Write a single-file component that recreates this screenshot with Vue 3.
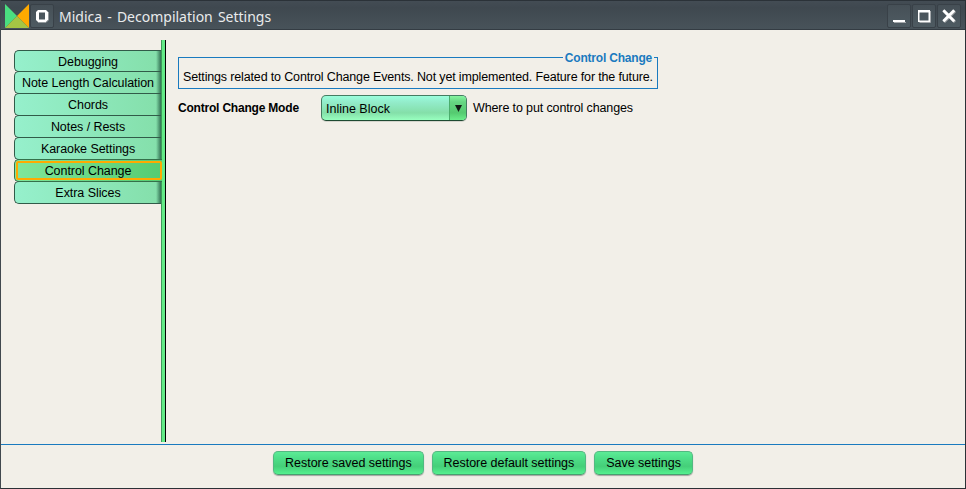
<script setup>
import { ref } from 'vue'

const tabs = [
  'Debugging',
  'Note Length Calculation',
  'Chords',
  'Notes / Rests',
  'Karaoke Settings',
  'Control Change',
  'Extra Slices',
]
const active = ref('Control Change')
const actions = ['Restore saved settings', 'Restore default settings', 'Save settings']
</script>

<template>
  <div class="window">
    <header class="titlebar">
      <svg class="logo" width="24" height="24" viewBox="0 0 24 24">
        <path d="M0 0L12 12L0 24Z" fill="#4ade80" />
        <path d="M24 0L12 12L24 24Z" fill="#ffaa00" />
        <path d="M12 12L24 24H0Z" fill="#a5c544" />
      </svg>
      <span class="wbtn menu">
        <svg width="22" height="22" viewBox="0 0 22 22">
          <path d="M7 5H15L17 7V15L15 17H7L5 15V7ZM8 7.5V14.5H14V7.5Z" fill="#fff" fill-rule="evenodd" />
          <path d="M7 17.5H15L17.5 15V7" fill="none" stroke="#a5a9ac" stroke-width="0.8" />
        </svg>
      </span>
      <h1 class="title">Midica - Decompilation Settings</h1>
      <div class="controls">
        <span class="wbtn">
          <svg width="22" height="22" viewBox="0 0 22 22">
            <path d="M6 17.5H18" stroke="#a5a9ac" />
            <path d="M5 16H17" stroke="#fff" stroke-width="2" />
          </svg>
        </span>
        <span class="wbtn">
          <svg width="22" height="22" viewBox="0 0 22 22">
            <path d="M6.5 17.5H17.5V6" fill="none" stroke="#a5a9ac" />
            <path d="M5 5H17V17H5ZM6.5 7.5V15.5H15.5V7.5Z" fill="#fff" fill-rule="evenodd" />
          </svg>
        </span>
        <span class="wbtn">
          <svg width="22" height="22" viewBox="0 0 22 22">
            <path d="M6 6L17 17M17 6L6 17" stroke="#9ca0a3" stroke-width="3" />
            <path d="M5.3 5.3L16.2 16.2M16.2 5.3L5.3 16.2" stroke="#fff" stroke-width="2.8" />
          </svg>
        </span>
      </div>
    </header>

    <main class="body">
      <nav class="tabs">
        <button
          v-for="tab in tabs"
          :key="tab"
          class="tab"
          :class="{ active: tab === active }"
          @click="active = tab"
        ><span class="label">{{ tab }}</span></button>
      </nav>
      <div class="strip"></div>
      <section class="panel">
        <fieldset class="info">
          <legend>Control Change</legend>
          <p>Settings related to Control Change Events. Not yet implemented. Feature for the future.</p>
        </fieldset>
        <div class="row">
          <strong class="name">Control Change Mode</strong>
          <div class="combo">
            <span class="value">Inline Block</span>
            <span class="arrow">
              <svg width="7" height="7" viewBox="0 0 7 7"><path d="M0 0H7L3.5 7Z" fill="#101c14" /></svg>
            </span>
          </div>
          <span class="hint">Where to put control changes</span>
        </div>
      </section>
    </main>

    <footer class="footer">
      <button v-for="action in actions" :key="action" class="action">{{ action }}</button>
    </footer>
  </div>
</template>

<style>
body {
  margin: 0;
  overflow: hidden;
}
</style>

<style scoped>
.window {
  box-sizing: border-box;
  width: 966px;
  height: 489px;
  display: flex;
  flex-direction: column;
  border: 1px solid #2b3136;
  border-top: 0;
  border-left-color: #41484e;
  background: #f2efe8;
  color: #000;
  font: 12.5px/15px 'Liberation Sans', Arial, sans-serif;
}
button {
  margin: 0;
  padding: 0;
  font: inherit;
  color: inherit;
}
.titlebar {
  box-sizing: border-box;
  flex: none;
  height: 30px;
  display: flex;
  align-items: flex-start;
  padding: 3px 4px 0;
  border-top: 1px solid #2b3238;
  border-bottom: 1px solid #343c43;
  background: linear-gradient(#434c54, #3f484f 25%, #48535a);
}
.logo {
  display: block;
}
.wbtn {
  display: block;
  width: 22px;
  height: 22px;
  border: 1px solid #394148;
  border-radius: 2px;
  background: linear-gradient(#465057, #4e5b62);
}
.wbtn svg {
  display: block;
}
.menu {
  margin-left: 1px;
}
.title {
  margin: 3px 0 0 5px;
  font: 400 14px/20px 'Noto Sans', sans-serif;
  word-spacing: 1.5px;
  color: #e9ebec;
}
.controls {
  display: flex;
  gap: 1px;
  margin-left: auto;
}
.body {
  flex: none;
  box-sizing: border-box;
  height: 414px;
  display: flex;
  padding: 10px 0 2px 13px;
}
.tabs {
  width: 147px;
  display: flex;
  flex-direction: column;
  padding-top: 10px;
}
.tab {
  box-sizing: border-box;
  height: 23px;
  margin-bottom: -1px;
  padding-top: 2px;
  border: 1px solid #315b49;
  border-right: 0;
  border-radius: 5px 0 0 5px;
  background:
    linear-gradient(90deg, transparent 141px, rgba(30, 85, 62, 0.8)),
    linear-gradient(90deg, #96f0cc, #84dfaa);
  line-height: 19px;
  letter-spacing: -0.06px;
}
.tab:first-child {
  height: 22px;
}
.label {
  display: block;
}
.tab.active {
  position: relative;
  margin-right: -1px;
  padding: 1px 0 1px 1px;
  border-color: #35704a;
  background: linear-gradient(90deg, #80e69b, #55cc72);
}
.active .label {
  box-sizing: border-box;
  height: 19px;
  padding: 1px 2px 0 0;
  border: 2px solid #ffaa00;
  border-radius: 2px;
  line-height: 15px;
}
.strip {
  box-sizing: border-box;
  width: 5px;
  border-left: 1px solid #3e9a5a;
  border-right: 1px solid #000;
  background: #63ea86;
}
.panel {
  padding: 10px 0 0 12px;
}
.info {
  box-sizing: border-box;
  width: 480px;
  height: 39px;
  min-width: 0;
  margin: 0;
  padding: 0 4px;
  border: 1px solid #1a7abf;
}
.info legend {
  margin-left: auto;
  margin-right: -1px;
  padding: 0 2px;
  height: 15px;
  font-size: 12px;
  font-weight: bold;
  line-height: 17px;
  letter-spacing: -0.2px;
  color: #1a7abf;
}
.info p {
  margin: 5px 0 0;
  white-space: nowrap;
  letter-spacing: -0.15px;
}
.row {
  display: flex;
  align-items: center;
  margin-top: 6px;
}
.name {
  width: 143px;
  font-size: 12px;
  letter-spacing: -0.2px;
}
.combo {
  box-sizing: border-box;
  width: 146px;
  height: 26px;
  display: flex;
  align-items: stretch;
  margin-right: 6px;
  border: 1px solid #457c62;
  border-bottom-color: #1e4a32;
  border-radius: 5px;
  overflow: hidden;
  background: linear-gradient(#9affdc, #93eccb 25%, #84dfa9 70%, #98ffbf);
  box-shadow: 0 1px 0 #d4d4cc;
}
.value {
  flex: 1;
  padding-left: 4px;
  line-height: 26px;
}
.arrow {
  width: 16px;
  display: flex;
  align-items: center;
  justify-content: center;
  border-left: 1px solid #4aad6c;
  background: linear-gradient(#85f5a0, #66d582 25%, #55ca70 70%, #6bee8b);
}
.hint {
  letter-spacing: -0.12px;
}
.footer {
  flex: 1;
  display: flex;
  justify-content: center;
  align-items: flex-start;
  gap: 8px;
  padding-top: 6px;
  border-top: 1px solid #1a7abf;
}
.action {
  box-sizing: border-box;
  height: 24px;
  padding: 0 11px;
  border: 1px solid #52b981;
  border-bottom-color: #499f70;
  border-radius: 5px;
  background: linear-gradient(#5ceb96, #4fe08a 25%, #45cf79 65%, #55f18f);
  box-shadow: 0 1px 1px #a6a3a0;
  line-height: 22px;
  letter-spacing: -0.03px;
}
</style>
